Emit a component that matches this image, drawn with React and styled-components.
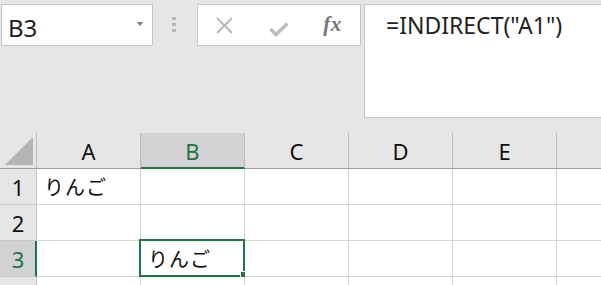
import React from "react";
import styled, { createGlobalStyle } from "styled-components";

const GREEN = "#217346";

const GlobalStyle = createGlobalStyle`
  html, body {
    margin: 0;
    padding: 0;
    background: #e6e6e6;
    overflow: hidden;
  }
  body {
    font-family: "Noto Sans", "Noto Sans CJK JP", sans-serif;
    color: #000000;
  }
`;

const Sheet = styled.div`
  width: 601px;
  height: 285px;
  overflow: hidden;
  background: #e6e6e6;
`;

const FormulaBar = styled.div`
  display: flex;
  align-items: flex-start;
  height: 133px;
  padding: 4px 0 0 1px;
  box-sizing: border-box;
`;

const NameBox = styled.div`
  display: flex;
  align-items: center;
  justify-content: space-between;
  width: 152px;
  height: 42px;
  box-sizing: border-box;
  padding: 4px 9px 0 6px;
  background: #ffffff;
  border: 1px solid #c6c6c6;
  font-size: 24px;
  color: #222222;
`;

const Caret = styled.span`
  width: 0;
  height: 0;
  margin-bottom: 6px;
  border-left: 3px solid transparent;
  border-right: 3px solid transparent;
  border-top: 4px solid #777777;
`;

const Grip = styled.div`
  display: flex;
  flex-direction: column;
  gap: 3px;
  margin: 13px 21px 0 19px;
  span {
    width: 4px;
    height: 3px;
    background: #b4b4b4;
  }
`;

const ButtonBox = styled.div`
  display: flex;
  align-items: center;
  width: 164px;
  height: 42px;
  box-sizing: border-box;
  background: #ffffff;
  border: 1px solid #c6c6c6;
`;

const IconButton = styled.span`
  display: flex;
  align-items: center;
  justify-content: center;
  width: ${(p) => p.$w}px;
  height: 100%;
`;

const Fx = styled.span`
  font-family: "Liberation Serif", "DejaVu Serif", serif;
  font-style: italic;
  font-weight: bold;
  font-size: 21px;
  color: #767676;
  letter-spacing: 0.5px;
  margin-top: -2px;
`;

const FormulaBox = styled.div`
  flex: 1;
  height: 114px;
  margin-left: 3px;
  box-sizing: border-box;
  padding: 3px 0 0 21px;
  background: #ffffff;
  border: 1px solid #c6c6c6;
  border-right: none;
  font-size: 23px;
  line-height: 34px;
  color: #222222;
  white-space: nowrap;
`;

const Grid = styled.div`
  display: grid;
  grid-template-columns: 37px repeat(6, 104px);
  grid-auto-rows: 36px;
`;

const Cell = styled.div`
  position: relative;
  box-sizing: border-box;
  display: flex;
  align-items: center;
  background: #ffffff;
  border-right: 1px solid #d4d4d4;
  border-bottom: 1px solid #d4d4d4;
  padding-left: 7px;
  font-family: "Noto Sans CJK JP", sans-serif;
  font-size: 20px;
  letter-spacing: 1px;
  color: #111111;
`;

const ColHead = styled.div`
  box-sizing: border-box;
  display: flex;
  align-items: center;
  justify-content: center;
  background: ${(p) => (p.$active ? "#d2d2d2" : "#e6e6e6")};
  border-right: 1px solid #bcbcbc;
  border-bottom: ${(p) => (p.$active ? `2px solid ${GREEN}` : "1px solid #9e9e9e")};
  font-size: 22px;
  padding-top: 1px;
  color: ${(p) => (p.$active ? GREEN : "#111111")};
`;

const RowHead = styled.div`
  box-sizing: border-box;
  display: flex;
  align-items: center;
  justify-content: center;
  background: ${(p) => (p.$active ? "#d2d2d2" : "#e6e6e6")};
  border-right: ${(p) => (p.$active ? `2px solid ${GREEN}` : "1px solid #c8c8c8")};
  border-bottom: 1px solid #c8c8c8;
  font-size: 22px;
  padding-left: ${(p) => (p.$active ? "1px" : "0")};
  color: ${(p) => (p.$active ? GREEN : "#111111")};
`;

const Corner = styled.div`
  box-sizing: border-box;
  background: #e6e6e6;
  border-right: 1px solid #bcbcbc;
  border-bottom: 1px solid #9e9e9e;
`;

const Selection = styled.div`
  position: absolute;
  top: -2px;
  left: -2px;
  right: -1px;
  bottom: -1px;
  border: 2px solid ${GREEN};
  pointer-events: none;
`;

const Handle = styled.span`
  position: absolute;
  right: -5px;
  bottom: -4px;
  width: 6px;
  height: 6px;
  background: ${GREEN};
  border: 1px solid #ffffff;
`;

const columns = ["A", "B", "C", "D", "E", ""];
const rows = [
  ["りんご", "", "", "", "", ""],
  ["", "", "", "", "", ""],
  ["", "りんご", "", "", "", ""],
  ["", "", "", "", "", ""],
];
const activeCol = 1;
const activeRow = 2;
// the 4th row is only a sliver at the bottom edge, its number is out of view
const visibleRows = 3;

export default function App() {
  return (
    <Sheet>
      <GlobalStyle />
      <FormulaBar>
        <NameBox>
          B3
          <Caret />
        </NameBox>
        <Grip>
          <span />
          <span />
          <span />
        </Grip>
        <ButtonBox>
          <IconButton $w={53}>
            <svg width="17" height="17" viewBox="0 0 17 17">
              <path d="M1 1 L16 16 M16 1 L1 16" stroke="#b9b9b9" strokeWidth="2" fill="none" />
            </svg>
          </IconButton>
          <IconButton $w={56}>
            <svg width="20" height="15" viewBox="0 0 20 15" style={{ marginTop: 8 }}>
              <path d="M1.5 7 L7 12.5 L18.5 1.5" stroke="#bdbdbd" strokeWidth="3.5" fill="none" />
            </svg>
          </IconButton>
          <IconButton $w={51}>
            <Fx>fx</Fx>
          </IconButton>
        </ButtonBox>
        <FormulaBox>=INDIRECT("A1")</FormulaBox>
      </FormulaBar>
      <Grid>
        <Corner>
          <svg width="36" height="35" viewBox="0 0 36 35">
            <polygon points="5,32 33,32 33,4" fill="#b4b4b4" />
          </svg>
        </Corner>
        {columns.map((c, i) => (
          <ColHead key={i} $active={i === activeCol}>
            {c}
          </ColHead>
        ))}
        {rows.map((r, ri) => (
          <React.Fragment key={ri}>
            <RowHead $active={ri === activeRow}>{ri < visibleRows ? ri + 1 : ""}</RowHead>
            {r.map((v, ci) => (
              <Cell key={ci}>
                {v}
                {ri === activeRow && ci === activeCol && (
                  <Selection>
                    <Handle />
                  </Selection>
                )}
              </Cell>
            ))}
          </React.Fragment>
        ))}
      </Grid>
    </Sheet>
  );
}
